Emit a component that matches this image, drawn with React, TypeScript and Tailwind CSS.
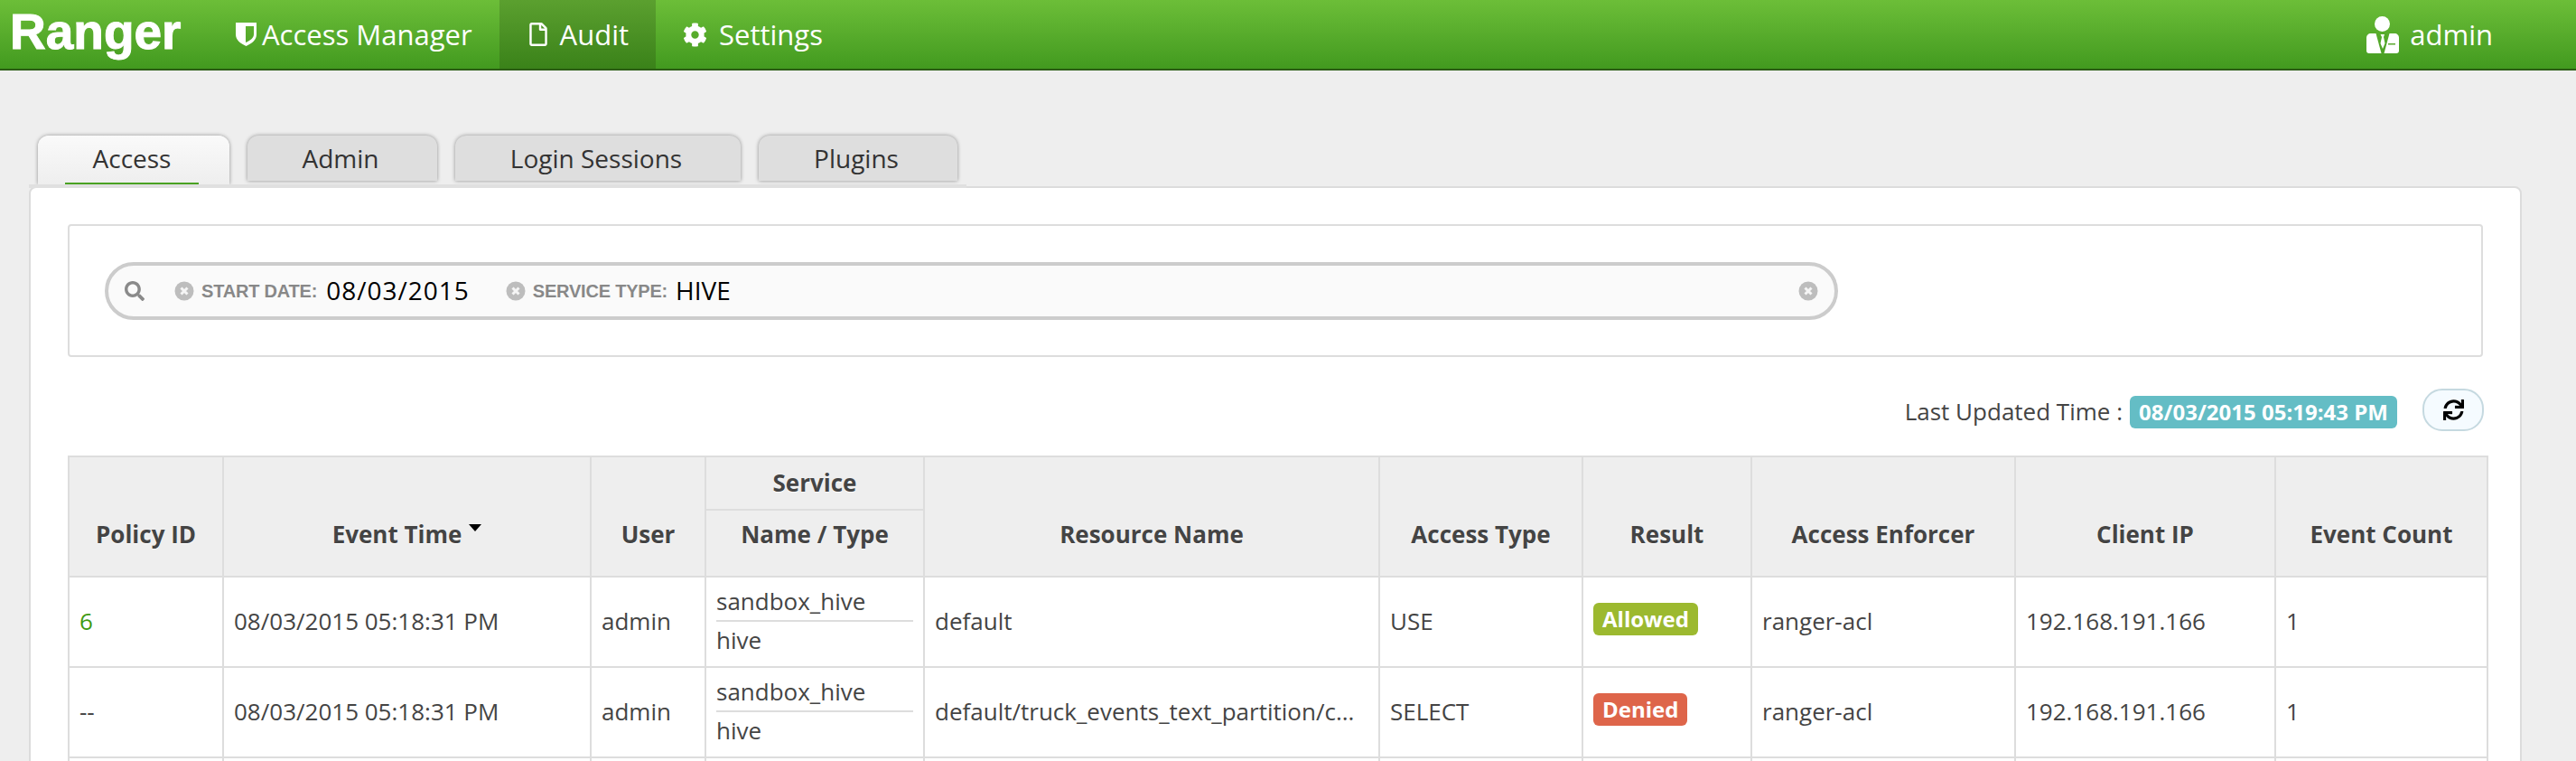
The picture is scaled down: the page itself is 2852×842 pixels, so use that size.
import React from "react";
import { FaCog, FaRegFile, FaSearch, FaSync } from "react-icons/fa";

const Shield = () => (
  <svg viewBox="0 0 23 26" className="h-[26px] w-[23px]" fill="#fff">
    <path fillRule="evenodd" d="M0 0h23v13c0 6-5 10-11.500 13C5 23 0 19 0 13V0zm11 4v18c5-2 9-5 9-9V4h-9z" />
  </svg>
);

const AdminIcon = () => (
  <svg viewBox="0 0 36 41" className="h-[41px] w-[36px]" fill="#fff">
    <circle cx="17.500" cy="8.500" r="8.500" />
    <path d="M5 19h5.500l6 22H3c-2 0-3-1-3-3V24c0-3 2-5 5-5z" />
    <path d="M31 19h-5.500l-6 22H33c2 0 3-1 3-3V24c0-3-2-5-5-5z" />
    <path d="M15.500 20h4.500l-1 3 1.500 7-2.500 6-2.500-6 1.500-7z" />
    <rect x="24" y="30" width="8" height="1.500" fill="#5aa82e" />
  </svg>
);

const Clear = ({ className = "" }: { className?: string }) => (
  <svg viewBox="0 0 22 22" className={`h-[22px] w-[22px] ${className}`}>
    <circle cx="11" cy="11" r="10.500" fill="#bdbdbd" />
    <path d="M7.500 7.500l7 7M14.500 7.500l-7 7" stroke="#f5f5f5" strokeWidth="3" />
  </svg>
);

const tabs = [
  { label: "Access", w: "w-[212px]", active: true },
  { label: "Admin", w: "w-[210px]" },
  { label: "Login Sessions", w: "w-[316px]" },
  { label: "Plugins", w: "w-[220px]" },
];

const Th = ({ children, rowSpan, colSpan, className = "" }: any) => (
  <th
    rowSpan={rowSpan}
    colSpan={colSpan}
    className={`border-2 border-[#dddddd] bg-[#eeeeee] text-center font-bold text-[#444444] [text-shadow:0_1px_0_#fff] ${className}`}
  >
    {children}
  </th>
);

const Td = ({ children, className = "" }: any) => (
  <td className={`border-2 border-[#dddddd] px-[11px] pb-[2px] align-middle text-[#444444] ${className}`}>{children}</td>
);

const Row = ({ id, idClass, res, access, result, badge }: any) => (
  <tr className="h-[100px]">
    <Td className={idClass}>{id}</Td>
    <Td>08/03/2015 05:18:31 PM</Td>
    <Td>admin</Td>
    <Td>
      <div className="flex h-[41px] items-center">sandbox_hive</div>
      <div className="h-[2px] bg-[#dddddd]" />
      <div className="flex h-[41px] items-center">hive</div>
    </Td>
    <Td className="whitespace-nowrap">{res}</Td>
    <Td>{access}</Td>
    <Td>
      <span className={`relative top-[-3px] inline-flex h-[36px] items-center rounded-[6px] px-[10px] text-[24px] font-bold text-white ${badge}`}>
        {result}
      </span>
    </Td>
    <Td>ranger-acl</Td>
    <Td>192.168.191.166</Td>
    <Td>1</Td>
  </tr>
);

export default function App() {
  return (
    <div className="h-[842px] overflow-hidden bg-[#eeeeee] font-['Open_Sans',sans-serif] text-[26px]">
      <nav className="flex h-[78px] border-b-2 border-[#2b5c14] bg-gradient-to-b from-[#6cbe38] to-[#429a1f] text-white">
        <div className="w-[231px] pl-[11px] pt-[1px] font-['Liberation_Sans',sans-serif] text-[55px] leading-[68px] font-bold [-webkit-text-stroke:1px_white]">Ranger</div>
        <a className="flex items-center gap-[6px] px-[30px] text-[31px]">
          <Shield />
          Access Manager
        </a>
        <a className="flex items-center gap-[11px] bg-gradient-to-b from-[#5ba02f] to-[#3a8219] px-[30px] text-[31px]">
          <FaRegFile size={26} />
          Audit
        </a>
        <a className="flex items-center gap-[13px] px-[30px] text-[31px]">
          <FaCog size={27} />
          Settings
        </a>
        <a className="ml-auto mr-[92px] flex items-center gap-[12px] text-[31px]">
          <AdminIcon />
          admin
        </a>
      </nav>

      <div className="flex h-[128px] items-start gap-[20px] pl-[42px] pt-[72px]">
        {tabs.map((t) => (
          <div
            key={t.label}
            className={`flex items-center justify-center rounded-t-[12px] pr-[4px] text-[28px] text-[#333333] shadow-[0_0_4px_rgba(0,0,0,0.4)] ${t.w} ${
              t.active ? "h-[54px] bg-gradient-to-b from-[#fafafa] to-[#eeeeee] pb-[4px]" : "h-[50px] bg-[#dedede]"
            }`}
          >
            {t.label}
          </div>
        ))}
      </div>

      <div className="relative ml-[32px] w-[2760px] rounded-[8px] border-2 border-[#dcdcdc] bg-white px-[41px] pt-[40px]">
        <div className="absolute left-[-2px] top-[-4px] h-[4px] w-[1038px] bg-[#e0e0e0]" />
        <div className="absolute left-[38px] top-[-6px] h-[2px] w-[148px] bg-[#4aa223]" />
        <div className="flex h-[147px] w-[2674px] items-center rounded-[4px] border-2 border-[#dddddd] pl-[39px]">
          <div className="flex h-[64px] w-[1919px] items-center rounded-full border-4 border-[#cccccc] bg-[#fafafa] pl-[18px] pr-[18px]">
            <FaSearch size={22} className="text-[#8a8a8a]" />
            <Clear className="ml-[33px]" />
            <span className="ml-[8px] font-['Liberation_Sans',sans-serif] text-[20px] font-bold tracking-[-0.2px] text-[#888888]">START DATE:</span>
            <span className="ml-[10px] pb-[2px] text-[28px] tracking-[1px] text-black">08/03/2015</span>
            <Clear className="ml-[40px]" />
            <span className="ml-[8px] font-['Liberation_Sans',sans-serif] text-[20px] font-bold tracking-[-0.2px] text-[#888888]">SERVICE TYPE:</span>
            <span className="ml-[9px] pb-[2px] text-[28px] text-black">HIVE</span>
            <Clear className="ml-auto" />
          </div>
        </div>

        <div className="flex h-[109px] w-[2675px] items-center justify-end pt-[12px] text-[#444444]">
          <span>Last Updated Time :</span>
          <span className="ml-[8px] flex h-[36px] w-[296px] items-center justify-center rounded-[6px] bg-[#64bdc5] text-[24px] font-bold text-white">
            08/03/2015 05:19:43 PM
          </span>
          <span className="mb-[4px] ml-[28px] flex h-[47px] w-[68px] items-center justify-center rounded-[22px] border-2 border-[#c5d9e0] bg-[#f5fbff] text-black">
            <FaSync size={23} />
          </span>
        </div>

        <table className="w-[2678px] table-fixed border-collapse">
          <colgroup>
            <col className="w-[171px]" />
            <col className="w-[407px]" />
            <col className="w-[127px]" />
            <col className="w-[242px]" />
            <col className="w-[504px]" />
            <col className="w-[225px]" />
            <col className="w-[187px]" />
            <col className="w-[292px]" />
            <col className="w-[288px]" />
            <col className="w-[235px]" />
          </colgroup>
          <thead>
            <tr className="h-[59px]">
              <Th rowSpan={2} className="pb-[26px] align-bottom">Policy ID</Th>
              <Th rowSpan={2} className="pb-[26px] align-bottom">
                Event Time
                <svg viewBox="0 0 14 8" className="relative top-[-10px] ml-[8px] inline-block h-[8px] w-[14px]">
                  <path d="M0 0h14L7 8z" fill="#000" />
                </svg>
              </Th>
              <Th rowSpan={2} className="pb-[26px] align-bottom">User</Th>
              <Th>Service</Th>
              <Th rowSpan={2} className="pb-[26px] align-bottom">Resource Name</Th>
              <Th rowSpan={2} className="pb-[26px] align-bottom">Access Type</Th>
              <Th rowSpan={2} className="pb-[26px] align-bottom">Result</Th>
              <Th rowSpan={2} className="pb-[26px] align-bottom">Access Enforcer</Th>
              <Th rowSpan={2} className="pb-[26px] align-bottom">Client IP</Th>
              <Th rowSpan={2} className="pb-[26px] align-bottom">Event Count</Th>
            </tr>
            <tr className="h-[74px]">
              <Th className="pb-[26px] align-bottom">Name / Type</Th>
            </tr>
          </thead>
          <tbody>
            <Row id="6" idClass="!text-[#3f9a12]" res="default" access="USE" result="Allowed" badge="bg-[#9cb92f]" />
            <Row id="--" res="default/truck_events_text_partition/c..." access="SELECT" result="Denied" badge="bg-[#de654a]" />
            <tr className="h-[100px]">
              {Array.from({ length: 10 }).map((_, i) => (
                <Td key={i} />
              ))}
            </tr>
          </tbody>
        </table>
      </div>
    </div>
  );
}
